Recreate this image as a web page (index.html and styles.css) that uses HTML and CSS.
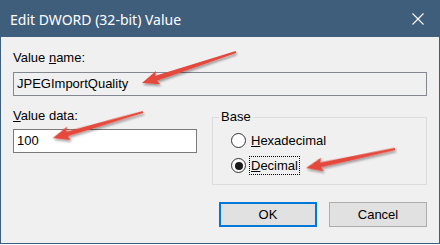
FILE: index.html
```html
<!DOCTYPE html>
<html lang="en">
  <head>
    <meta charset="utf-8" />
    <title>Edit DWORD (32-bit) Value</title>
    <link rel="stylesheet" href="styles.css">
  </head>
  <body>
    <div class="window">
      <div class="titlebar">
        <span class="title">Edit DWORD (32-bit) Value</span>
        <svg class="close" width="12" height="12" viewBox="0 0 12 12">
          <path d="M0.5 0.5 L11.5 11.5 M11.5 0.5 L0.5 11.5" stroke="#fff" stroke-width="1.1" fill="none" />
        </svg>
      </div>

      <div class="content">
        <div class="label">Value <u>n</u>ame:</div>
        <div class="field readonly">JPEGImportQuality</div>

        <div class="row">
          <div class="col">
            <div class="label"><u>V</u>alue data:</div>
            <div class="field">100</div>
          </div>

          <!-- radio group -->
          <fieldset class="base">
            <legend>Base</legend>
            <div class="option">
              <span class="radio"></span>
              <span class="opt-text"><u>H</u>exadecimal</span>
            </div>
            <div class="option">
              <span class="radio checked"></span>
              <span class="opt-text focus"><u>D</u>ecimal</span>
            </div>
          </fieldset>
        </div>

        <div class="buttons">
          <button class="btn default">OK</button>
          <button class="btn">Cancel</button>
        </div>
      </div>

      <!-- annotation arrows drawn over the dialog -->
      <svg class="arrows" width="440" height="245" viewBox="0 0 440 245">
        <defs>
          <filter id="shadow" x="-20%" y="-50%" width="140%" height="200%">
            <feDropShadow dx="1" dy="2" stdDeviation="1.2" flood-color="#000" flood-opacity="0.35" />
          </filter>
        </defs>
        <g fill="#e5483c" filter="url(#shadow)">
          <polygon transform="translate(236,52) rotate(161.75)" points="0,-1 84,-2.6 82,-7 99,0 82,7 84,2.6 0,1" />
          <polygon transform="translate(143,112) rotate(163.9)" points="0,-1 79,-2.6 77,-7 94,0 77,7 79,2.6 0,1" />
          <polygon transform="translate(395,149) rotate(167.95)" points="0,-1.2 76,-2.6 74,-7 91,0 74,7 76,2.6 0,1.2" />
        </g>
      </svg>
    </div>
  </body>
</html>
```

FILE: styles.css
```css
body {
  margin: 0;
  background-color: #fff;
}

.window {
  position: relative;
  width: 440px;
  height: 244px;
  box-sizing: border-box;
  border: 1px solid #3f5e7c;
  border-top: 0;
  background-color: #f0f0f0;
  display: flex;
  flex-direction: column;
  font-family: "Liberation Sans", Arial, sans-serif;
  font-size: 13px;
  line-height: 15px;
  color: #000;
}

.titlebar {
  height: 37px;
  flex: none;
  background-color: #3f5e7c;
  display: flex;
  align-items: center;
  justify-content: space-between;
  padding: 0 15px 0 9px;
}

.title {
  color: #fff;
  font-family: "Noto Sans", sans-serif;
  font-size: 14px;
  padding-top: 1px;
}

.close {
  display: block;
  margin-top: 1px;
}

.content {
  flex: 1;
  padding: 13px 12px 0 12px;
}

.field {
  height: 24px;
  box-sizing: border-box;
  border: 1px solid #7a7a7a;
  background-color: #fff;
  padding: 0 3px;
  line-height: 22px;
  margin-top: 7px;
}

.field.readonly {
  background-color: #f0f0f0;
  border-color: #828790;
}

.row {
  display: flex;
  margin-top: 12px;
}

.col {
  width: 184px;
}

.col .field {
  margin-top: 6px;
}

/* group box */
.base {
  width: 215px;
  box-sizing: border-box;
  margin: 0 0 0 15px;
  padding: 2px 0 6px 6px;
  border: 1px solid #dcdcdc;
}

.base legend {
  padding: 0 2px;
  line-height: 18px;
}

.option {
  height: 25px;
  display: flex;
  align-items: center;
  padding-left: 12px;
}

.radio {
  width: 15px;
  height: 15px;
  box-sizing: border-box;
  border: 1px solid #333;
  border-radius: 50%;
  background-color: #fff;
  display: flex;
  align-items: center;
  justify-content: center;
}

.radio.checked::after {
  content: '';
  width: 8px;
  height: 8px;
  border-radius: 50%;
  background-color: #1a1a1a;
}

.opt-text {
  margin-left: 3px;
  padding: 1px;
  border: 1px dotted transparent;
}

.opt-text.focus {
  border-color: #000;
}

.buttons {
  display: flex;
  justify-content: flex-end;
  gap: 12px;
  margin-top: 17px;
}

.btn {
  width: 98px;
  height: 25px;
  box-sizing: border-box;
  border: 1px solid #adadad;
  background-color: #e1e1e1;
  font-family: "Liberation Sans", Arial, sans-serif;
  font-size: 13px;
  color: #000;
  padding: 0;
}

.btn.default {
  border: 2px solid #0078d7;
}

.arrows {
  position: absolute;
  top: 0;
  left: -1px;
  pointer-events: none;
}
```
